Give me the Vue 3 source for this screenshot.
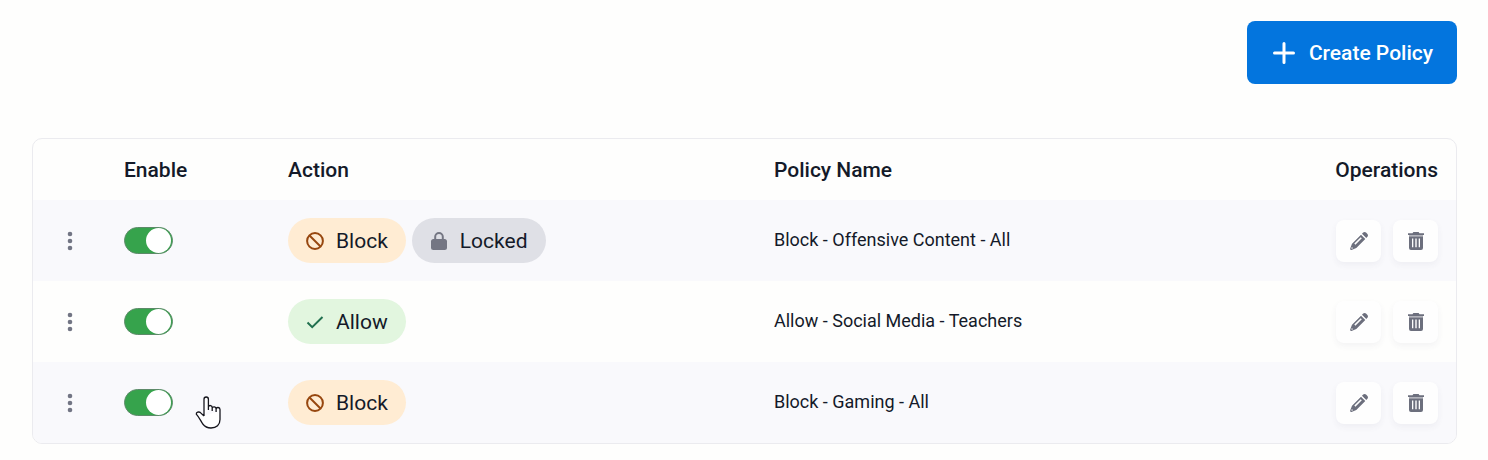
<script setup>
import { ref } from 'vue'

const policies = ref([
  { id: 1, name: 'Block - Offensive Content - All', action: 'block', locked: true, enabled: true },
  { id: 2, name: 'Allow - Social Media - Teachers', action: 'allow', locked: false, enabled: true },
  { id: 3, name: 'Block - Gaming - All', action: 'block', locked: false, enabled: true }
])

const actionLabels = {
  block: 'Block',
  allow: 'Allow'
}
</script>

<template>
  <main class="policies">
    <div class="toolbar">
      <button class="btn-create" type="button">
        <svg class="plus-icon" viewBox="0 0 22 22" aria-hidden="true">
          <path d="M11 1.5v19M1.5 11h19" />
        </svg>
        Create Policy
      </button>
    </div>

    <div class="table-card">
      <table class="policy-table">
        <colgroup>
          <col class="col-menu" />
          <col class="col-enable" />
          <col class="col-action" />
          <col />
          <col class="col-operations" />
        </colgroup>
        <thead>
          <tr>
            <th></th>
            <th scope="col">Enable</th>
            <th scope="col">Action</th>
            <th scope="col">Policy Name</th>
            <th scope="col" class="operations-head">Operations</th>
          </tr>
        </thead>
        <tbody>
          <tr v-for="policy in policies" :key="policy.id">
            <td>
              <button class="btn-menu" type="button" aria-label="More options">
                <svg viewBox="0 0 6 20" aria-hidden="true">
                  <circle cx="3" cy="3" r="2.3" />
                  <circle cx="3" cy="10" r="2.3" />
                  <circle cx="3" cy="17" r="2.3" />
                </svg>
              </button>
            </td>
            <td>
              <input
                v-model="policy.enabled"
                class="toggle"
                type="checkbox"
                role="switch"
                :aria-label="`Enable ${policy.name}`"
              />
            </td>
            <td>
              <div class="pills">
                <span :class="['pill', policy.action]">
                  <svg v-if="policy.action === 'block'" viewBox="0 0 18 18" aria-hidden="true">
                    <circle cx="9" cy="9" r="7.9" />
                    <path d="M3.5 3.5l11 11" />
                  </svg>
                  <svg v-else viewBox="0 0 18 18" aria-hidden="true">
                    <path d="M1.5 9.5l4.7 4.7L16.5 4" />
                  </svg>
                  {{ actionLabels[policy.action] }}
                </span>
                <span v-if="policy.locked" class="pill locked">
                  <svg viewBox="0 0 18 18" aria-hidden="true">
                    <path class="shackle" d="M5.2 8V4.8a3.8 3.8 0 0 1 7.6 0V8" />
                    <rect x="1" y="7" width="16" height="11" rx="2.5" />
                  </svg>
                  Locked
                </span>
              </div>
            </td>
            <td class="policy-name">{{ policy.name }}</td>
            <td>
              <div class="operations">
                <button class="btn-icon" type="button" :aria-label="`Edit ${policy.name}`">
                  <svg viewBox="0 0 18 18" aria-hidden="true">
                    <path
                      fill-rule="evenodd"
                      d="M11 2.700l4.300 4.300L6.300 16 1.500 17.900Q0 18.200.2 16.600L2 11.700zM10.700 5.200L4.300 11.600l1.100 1.100 6.400-6.400zM1.800 14.900l-.5 1.800 1.900-.5zM12 1.700l.9-.9a2.500 2.500 0 0 1 3.400 0l.9.9a2.500 2.500 0 0 1 0 3.400l-.9.900z"
                    />
                  </svg>
                </button>
                <button class="btn-icon" type="button" :aria-label="`Delete ${policy.name}`">
                  <svg viewBox="0 0 18 18" aria-hidden="true">
                    <path d="M1 1.300h4.500L6.400 0h5.200l.9 1.300H17v1.800H1z" />
                    <path class="trash-rim" d="M2 3.100h14v1.600H2z" />
                    <path
                      fill-rule="evenodd"
                      d="M2 4.600h14V16a2 2 0 0 1-2 2H4a2 2 0 0 1-2-2zM5 6.600v8.600h1.300V6.600zM8.300 6.600v8.600h1.400V6.600zM11.700 6.600v8.600H13V6.600z"
                    />
                  </svg>
                </button>
              </div>
            </td>
          </tr>
        </tbody>
      </table>
    </div>

    <svg class="pointer" viewBox="0 0 26 33" aria-hidden="true">
      <path
        d="M9 20V3.200a2.200 2.200 0 0 1 4.400 0V14M9 20l-3.600-3.400c-1.600-1.300-4.300-.2-4.100 1.500 3 3.300 4.200 6.500 6.500 9.900 2 2.700 4.700 4 8.200 4 5.500 0 9-3.200 9-8.500V13.500c0-2.500-3.700-2.700-3.900-.3V16M13.400 10.800c.6-2 3.800-1.600 3.800.6V15M17.200 12c.6-1.700 3.900-1.400 3.900.9"
      />
    </svg>
  </main>
</template>

<style>
body {
  margin: 0;
  background: #fefefd;
}
</style>

<style scoped>
.policies {
  position: relative;
  padding: 21px 31px 16px 32px;
  color: #141a29;
  font-family: Roboto, sans-serif;
}

.toolbar {
  display: flex;
  justify-content: flex-end;
  margin-bottom: 54px;
}

.btn-create {
  display: flex;
  align-items: center;
  gap: 14px;
  height: 63px;
  padding: 0 24px 0 26px;
  border: 0;
  border-radius: 8px;
  background: #0375de;
  color: #fff;
  font-family: inherit;
  font-size: 21px;
  font-weight: 500;
  cursor: pointer;
}

.plus-icon {
  width: 22px;
  height: 22px;
  fill: none;
  stroke: currentColor;
  stroke-width: 3;
  stroke-linecap: round;
}

.table-card {
  overflow: hidden;
  border: 1px solid #ebebef;
  border-radius: 10px;
}

.policy-table {
  width: 100%;
  border-collapse: collapse;
  table-layout: fixed;
}

.col-menu {
  width: 91px;
}

.col-enable {
  width: 164px;
}

.col-action {
  width: 486px;
}

.col-operations {
  width: 160px;
}

th,
td {
  box-sizing: border-box;
  padding: 0;
}

th {
  height: 61px;
  font-size: 21px;
  font-weight: 500;
  text-align: left;
}

td {
  height: 81px;
}

tbody tr:nth-child(odd) {
  background: #f9f9fc;
}

.operations-head {
  padding-right: 18px;
  text-align: right;
}

.btn-menu {
  display: block;
  margin-left: 29px;
  padding: 4px 5px;
  border: 0;
  background: none;
  cursor: pointer;
}

.btn-menu svg {
  display: block;
  width: 6px;
  height: 20px;
  fill: #727584;
}

.toggle {
  display: flex;
  align-items: center;
  box-sizing: border-box;
  width: 49px;
  height: 27px;
  margin: 0;
  padding: 0 1px;
  border: 1px solid #5d8a69;
  border-radius: 14px;
  background: #9a9ca6;
  appearance: none;
  cursor: pointer;
}

.toggle::before {
  width: 25px;
  height: 25px;
  border-radius: 50%;
  background: #fff;
  content: '';
}

.toggle:checked {
  justify-content: flex-end;
  background: #36a34c;
}

.pills {
  display: flex;
  gap: 6px;
}

.pill {
  display: flex;
  align-items: center;
  gap: 12px;
  height: 45px;
  padding: 0 18px;
  border-radius: 23px;
  font-size: 21px;
}

.pill svg {
  width: 18px;
  height: 18px;
  fill: none;
  stroke: currentColor;
  stroke-width: 2;
}

.pill.block {
  background: #ffecd3;
}

.pill.block svg {
  stroke: #97470f;
}

.pill.allow {
  background: #e2f6df;
}

.pill.allow svg {
  stroke: #21704f;
}

.pill.locked {
  background: #dfe0e6;
}

.pill.locked svg {
  fill: #747683;
  stroke: none;
}

.pill.locked .shackle {
  fill: none;
  stroke: #747683;
}

.policy-name {
  padding-bottom: 3px;
  font-size: 18px;
}

.operations {
  display: flex;
  justify-content: flex-end;
  gap: 12px;
  padding-right: 18px;
}

.btn-icon {
  display: flex;
  align-items: center;
  justify-content: center;
  width: 45px;
  height: 42px;
  padding: 0;
  border: 0;
  border-radius: 8px;
  background: #fefefe;
  box-shadow: 0 3px 6px rgba(60, 60, 110, 0.06);
  cursor: pointer;
}

.btn-icon svg {
  width: 18px;
  height: 18px;
  fill: #6c6f7d;
}

.btn-icon .trash-rim {
  fill: #b3b4bc;
}

.pointer {
  position: absolute;
  top: 396px;
  left: 195px;
  width: 26px;
  height: 33px;
  fill: #fff;
  stroke: #15151c;
  stroke-width: 1.3;
  stroke-linejoin: round;
  pointer-events: none;
}
</style>
